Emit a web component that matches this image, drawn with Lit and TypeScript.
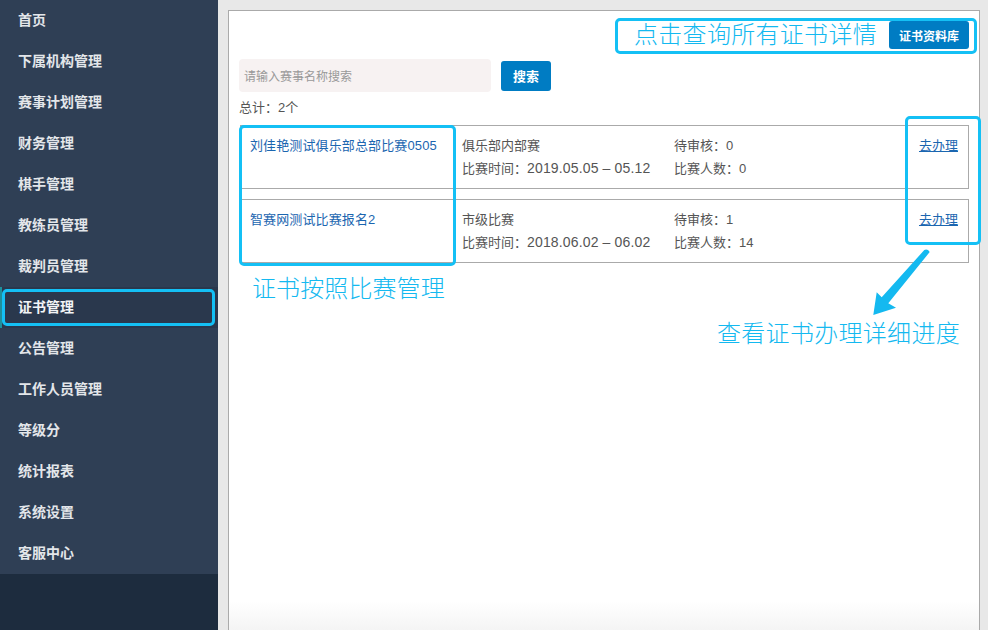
import { LitElement, html, css, svg } from 'lit';
import { customElement } from 'lit/decorators.js';

const MENU = [
  '首页', '下属机构管理', '赛事计划管理', '财务管理', '棋手管理', '教练员管理', '裁判员管理',
  '证书管理', '公告管理', '工作人员管理', '等级分', '统计报表', '系统设置', '客服中心',
];
const ACTIVE = '证书管理';

const MATCHES = [
  { name: '刘佳艳测试俱乐部总部比赛0505', type: '俱乐部内部赛', time: '2019.05.05 – 05.12', pending: 0, players: 0 },
  { name: '智赛网测试比赛报名2', type: '市级比赛', time: '2018.06.02 – 06.02', pending: 1, players: 14 },
];

@customElement('app-root')
export class AppRoot extends LitElement {
  static styles = css`
    :host {
      display: block;
      position: relative;
      width: 988px;
      height: 630px;
      overflow: hidden;
      background: #e8e8e8;
      font-family: "Liberation Sans", "Noto Sans CJK SC", sans-serif;
      color: #555;
    }
    .layout { display: flex; height: 630px; }

    /* Sidebar */
    .sidebar {
      width: 218px;
      flex: none;
      display: flex;
      flex-direction: column;
      background: #1d2c3e;
    }
    .menu { background: #2f3f55; height: 574px; }
    .menu-item {
      height: 41px;
      box-sizing: border-box;
      padding: 0 0 4px 18px;
      display: flex;
      align-items: center;
      font-size: 14px;
      font-weight: 700;
      color: #e3e6ea;
    }
    .menu-item.active {
      background: #2a384d;
      color: #f2f4f6;
      box-shadow: inset 2px 0 0 #1f8f9c;
    }

    /* Main panel */
    .main { flex: 1; padding: 10px 8px 0 10px; min-width: 0; }
    .panel {
      height: 620px;
      box-sizing: border-box;
      border: 1px solid #aaa;
      border-bottom: none;
      background: linear-gradient(#fff 590px, #f4f4f4 620px);
      padding: 10px 10px 0 10px;
    }
    .top { display: flex; justify-content: flex-end; height: 28px; }
    .btn {
      background: #007cc3;
      color: #fff;
      border-radius: 3px;
      display: flex;
      align-items: center;
      justify-content: center;
      font-weight: 700;
    }
    .btn-lib { width: 80px; height: 28px; font-size: 12px; }
    .search { display: flex; align-items: center; gap: 10px; margin-top: 10px; height: 33px; }
    .search-input {
      width: 252px;
      height: 33px;
      box-sizing: border-box;
      padding-left: 5px;
      display: flex;
      align-items: center;
      background: #f7f2f2;
      border-radius: 4px;
      font-size: 12px;
      color: #999;
    }
    .btn-search { width: 50px; height: 30px; font-size: 13px; }
    .total { font-size: 13px; line-height: 18px; margin-top: 7px; color: #555; }
    .cards { display: flex; flex-direction: column; gap: 10px; margin-top: 8px; margin-left: 1px; }
    .card {
      height: 64px;
      box-sizing: border-box;
      border: 1px solid #aaa;
      display: grid;
      grid-template-columns: 212px 212px 1fr auto;
      padding: 8px 10px 0 9px;
      font-size: 13px;
      line-height: 23px;
    }
    .name { color: #1b66b0; white-space: nowrap; letter-spacing: .12px; }
    .cell { white-space: nowrap; color: #555; }
    .date { font-size: 14px; letter-spacing: .15px; }
    .go { color: #1b66b0; text-decoration: underline; }

    /* Annotations drawn on top of the screenshot */
    .mark {
      position: absolute;
      box-sizing: border-box;
      border: 3px solid #14c0f5;
      border-radius: 5px;
    }
    .note {
      position: absolute;
      color: #14b9f0;
      font-family: "Noto Sans CJK SC", sans-serif;
      font-weight: 300;
      font-size: 24px;
      line-height: 1.2;
      letter-spacing: .3px;
      white-space: nowrap;
    }
    .m-top { left: 615px; top: 18px; width: 362px; height: 36px; }
    .m-side { left: 2px; top: 289px; width: 213px; height: 37px; }
    .m-name { left: 239px; top: 125px; width: 217px; height: 141px; }
    .m-go { left: 905px; top: 116px; width: 76px; height: 129px; }
    .n-top { left: 634px; top: 19px; }
    .n-name { left: 252px; top: 273px; letter-spacing: .1px; }
    .n-go { left: 717px; top: 318px; }
    .arrow { position: absolute; left: 860px; top: 240px; }
  `;

  private _arrow() {
    return html`<svg class="arrow" width="80" height="80" viewBox="0 0 80 80">
      ${svg`<path d="M64.3 10 Q67.5 8.5 69.7 12 L28.3 63.3 L36 67.7 L13.3 75 L16.7 52.3 L21.7 57.3 Z" fill="#14b9f0"></path>`}
    </svg>`;
  }

  render() {
    return html`
      <div class="layout">
        <nav class="sidebar">
          <div class="menu">
            ${MENU.map(m => html`<div class="menu-item ${m === ACTIVE ? 'active' : ''}">${m}</div>`)}
          </div>
        </nav>
        <main class="main">
          <div class="panel">
            <div class="top"><div class="btn btn-lib">证书资料库</div></div>
            <div class="search">
              <div class="search-input">请输入赛事名称搜索</div>
              <div class="btn btn-search">搜索</div>
            </div>
            <div class="total">总计：2个</div>
            <div class="cards">
              ${MATCHES.map(c => html`
                <div class="card">
                  <div class="name">${c.name}</div>
                  <div>
                    <div class="cell">${c.type}</div>
                    <div class="cell">比赛时间：<span class="date">${c.time}</span></div>
                  </div>
                  <div>
                    <div class="cell">待审核：${c.pending}</div>
                    <div class="cell">比赛人数：${c.players}</div>
                  </div>
                  <div class="go">去办理</div>
                </div>
              `)}
            </div>
          </div>
        </main>
      </div>

      <div class="mark m-top"></div>
      <div class="mark m-side"></div>
      <div class="mark m-name"></div>
      <div class="mark m-go"></div>
      <div class="note n-top">点击查询所有证书详情</div>
      <div class="note n-name">证书按照比赛管理</div>
      <div class="note n-go">查看证书办理详细进度</div>
      ${this._arrow()}
    `;
  }
}
